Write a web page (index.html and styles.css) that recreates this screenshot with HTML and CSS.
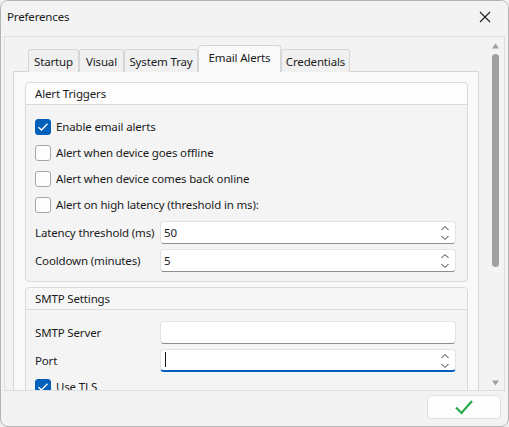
FILE: index.html
```html
<!doctype html>
<html>
<head>
	<meta http-equiv="Content-Type" content="text/html; charset=UTF-8">
	<title>Preferences</title>
	<link rel="stylesheet" href="styles.css">
</head>
<body>
	<div class="window">
		<div class="titlebar">
			<span class="titlebar__text">Preferences</span>
			<svg class="titlebar__close" width="12" height="12" viewBox="0 0 12 12"><path d="M1 1L11 11M11 1L1 11" stroke="#1f1f1f" stroke-width="1.1" fill="none"/></svg>
		</div>
		<div class="scroller">
			<div class="viewport">
				<div class="tabs">
					<span class="tab tab--startup">Startup</span>
					<span class="tab tab--visual">Visual</span>
					<span class="tab tab--tray">System Tray</span>
					<span class="tab tab--email tab--active">Email Alerts</span>
					<span class="tab tab--cred">Credentials</span>
				</div>
				<div class="pane">
					<div class="group">
						<div class="group__title">Alert Triggers</div>
						<div class="group__body">
							<label class="check"><span class="check__box check__box--on"><svg width="12" height="10" viewBox="0 0 12 10"><path d="M1.5 5.2L4.5 8L10.5 1.8" stroke="#fff" stroke-width="1.3" fill="none"/></svg></span>Enable email alerts</label>
							<label class="check"><span class="check__box"></span>Alert when device goes offline</label>
							<label class="check"><span class="check__box"></span>Alert when device comes back online</label>
							<label class="check"><span class="check__box"></span>Alert on high latency (threshold in ms):</label>
							<div class="field">
								<span class="field__label">Latency threshold (ms)</span>
								<div class="input">50<svg class="spin" width="10" height="16" viewBox="0 0 10 16"><path d="M1.5 5L5 1.5L8.5 5M1.5 11L5 14.5L8.5 11" stroke="#333" stroke-width="1" fill="none"/></svg></div>
							</div>
							<div class="field">
								<span class="field__label">Cooldown (minutes)</span>
								<div class="input">5<svg class="spin" width="10" height="16" viewBox="0 0 10 16"><path d="M1.5 5L5 1.5L8.5 5M1.5 11L5 14.5L8.5 11" stroke="#333" stroke-width="1" fill="none"/></svg></div>
							</div>
						</div>
					</div>
					<div class="group group--smtp">
						<div class="group__title group__title--dim">SMTP Settings</div>
						<div class="group__body group__body--smtp">
							<div class="field">
								<span class="field__label">SMTP Server</span>
								<div class="input"></div>
							</div>
							<div class="field">
								<span class="field__label">Port</span>
								<div class="input input--focus"><span class="caret"></span><svg class="spin" width="10" height="16" viewBox="0 0 10 16"><path d="M1.5 5L5 1.5L8.5 5M1.5 11L5 14.5L8.5 11" stroke="#333" stroke-width="1" fill="none"/></svg></div>
							</div>
							<label class="check"><span class="check__box check__box--on"><svg width="12" height="10" viewBox="0 0 12 10"><path d="M1.5 5.2L4.5 8L10.5 1.8" stroke="#fff" stroke-width="1.3" fill="none"/></svg></span>Use TLS</label>
						</div>
					</div>
				</div>
			</div>
			<div class="vscroll">
				<svg class="vscroll__arrow" width="7" height="6" viewBox="0 0 7 6"><path d="M3.5 0.5L7 5.5H0Z" fill="#a0a0a0"/></svg>
				<div class="vscroll__thumb"></div>
				<div class="vscroll__rest"></div>
				<svg class="vscroll__arrow" width="7" height="6" viewBox="0 0 7 6"><path d="M0 0.5H7L3.5 5.5Z" fill="#a0a0a0"/></svg>
			</div>
		</div>
		<div class="footer">
			<button class="footer__ok"><svg width="20" height="16" viewBox="0 0 20 16"><path d="M2 8.5L7.5 14L18 2" stroke="#2aa84a" stroke-width="2.2" fill="none"/></svg></button>
		</div>
	</div>
</body>
</html>
```

FILE: styles.css
```css
*,*:before,*:after{box-sizing:border-box;margin:0;padding:0}
body{background:#f0f0f0;font-family:'Noto Sans', sans-serif;font-size:11.5px;letter-spacing:-0.15px;color:#1b1b1b;width:509px;height:427px;overflow:hidden}

.window{width:509px;height:427px;border:1px solid #b4b4b4;border-radius:8px;background:#f3f3f3;display:flex;flex-direction:column;overflow:hidden}

.titlebar{height:35px;flex:none;display:flex;align-items:center;justify-content:space-between;padding:0 17px 4px 6px;background:#f3f3f3}
.titlebar__text{font-size:11.5px;color:#1a1a1a}

.scroller{height:355px;flex:none;margin:0 3px 0 3px;border:1px solid #dedede;display:flex;background:#f3f3f3}
.viewport{width:481px;flex:none;overflow:hidden;padding:8px 0 0 8px}
.tabs{display:flex;align-items:flex-end;height:27px;margin:0 0 -1px 15px;position:relative;z-index:1}
.tab{height:23px;border:1px solid #d6d6d6;border-bottom:0;background:#f0f0f0;border-radius:3px 3px 0 0;display:flex;align-items:center;justify-content:center;color:#1b1b1b;white-space:nowrap}
.tab--active{height:27px;background:#f9f9f9;padding-bottom:4px}
.tab--startup{width:51px}
.tab--visual{width:45px}
.tab--tray{width:74px}
.tab--email{width:83px}
.tab--cred{width:69px}

.pane{width:466px;height:340px;border:1px solid #d6d6d6;border-bottom:0;background:#f9f9f9;padding:10px 10px 0 11px}

.group{border:1px solid #dadada;border-radius:4px;background:#f4f4f4}
.group--smtp{margin-top:5px}
.group__title{height:22px;border-bottom:1px solid #dadada;background:#fdfdfd;border-radius:4px 4px 0 0;padding-left:9px;display:flex;align-items:center}
.group__title--dim{background:#f6f6f6}
.group__body{padding:9px 10px 7px 9px}
.group__body--smtp{padding-top:8px}

.check{height:26px;display:flex;align-items:center;white-space:nowrap;padding-bottom:1px}
.check__box{width:16px;height:16px;flex:none;border:1px solid #a6a6a6;border-radius:3px;background:#fdfdfd;margin-right:5px;display:flex;align-items:center;justify-content:center}
.check__box--on{background:#005fb8;border-color:#005fb8}

.field{height:28px;display:flex;align-items:center}
.field__label{width:125px;flex:none;white-space:nowrap}
.input{width:296px;height:23px;background:#fff;border:1px solid #e2e2e2;border-bottom-color:#8e8e8e;border-radius:4px;display:flex;align-items:center;padding-left:3px;position:relative}
.input--focus{border-bottom:2px solid #005fb8}
.caret{width:1px;height:15px;background:#1b1b1b;margin-left:1px}
.spin{position:absolute;right:5px;top:3px}

.vscroll{width:18px;flex:none;display:flex;flex-direction:column;align-items:center;padding:6px 0 4px 1px}
.vscroll__arrow{flex:none}
.vscroll__thumb{width:7px;height:213px;margin-top:5px;background:#a0a0a0;border-radius:4px;flex:none}
.vscroll__rest{flex:1}

.footer{flex:1;display:flex;justify-content:flex-end;align-items:flex-start;padding:4px 7px 0 0}
.footer__ok{width:74px;height:24px;background:#fdfdfd;border:1px solid #e0e0e0;border-radius:4px;display:flex;align-items:center;justify-content:center}
```
